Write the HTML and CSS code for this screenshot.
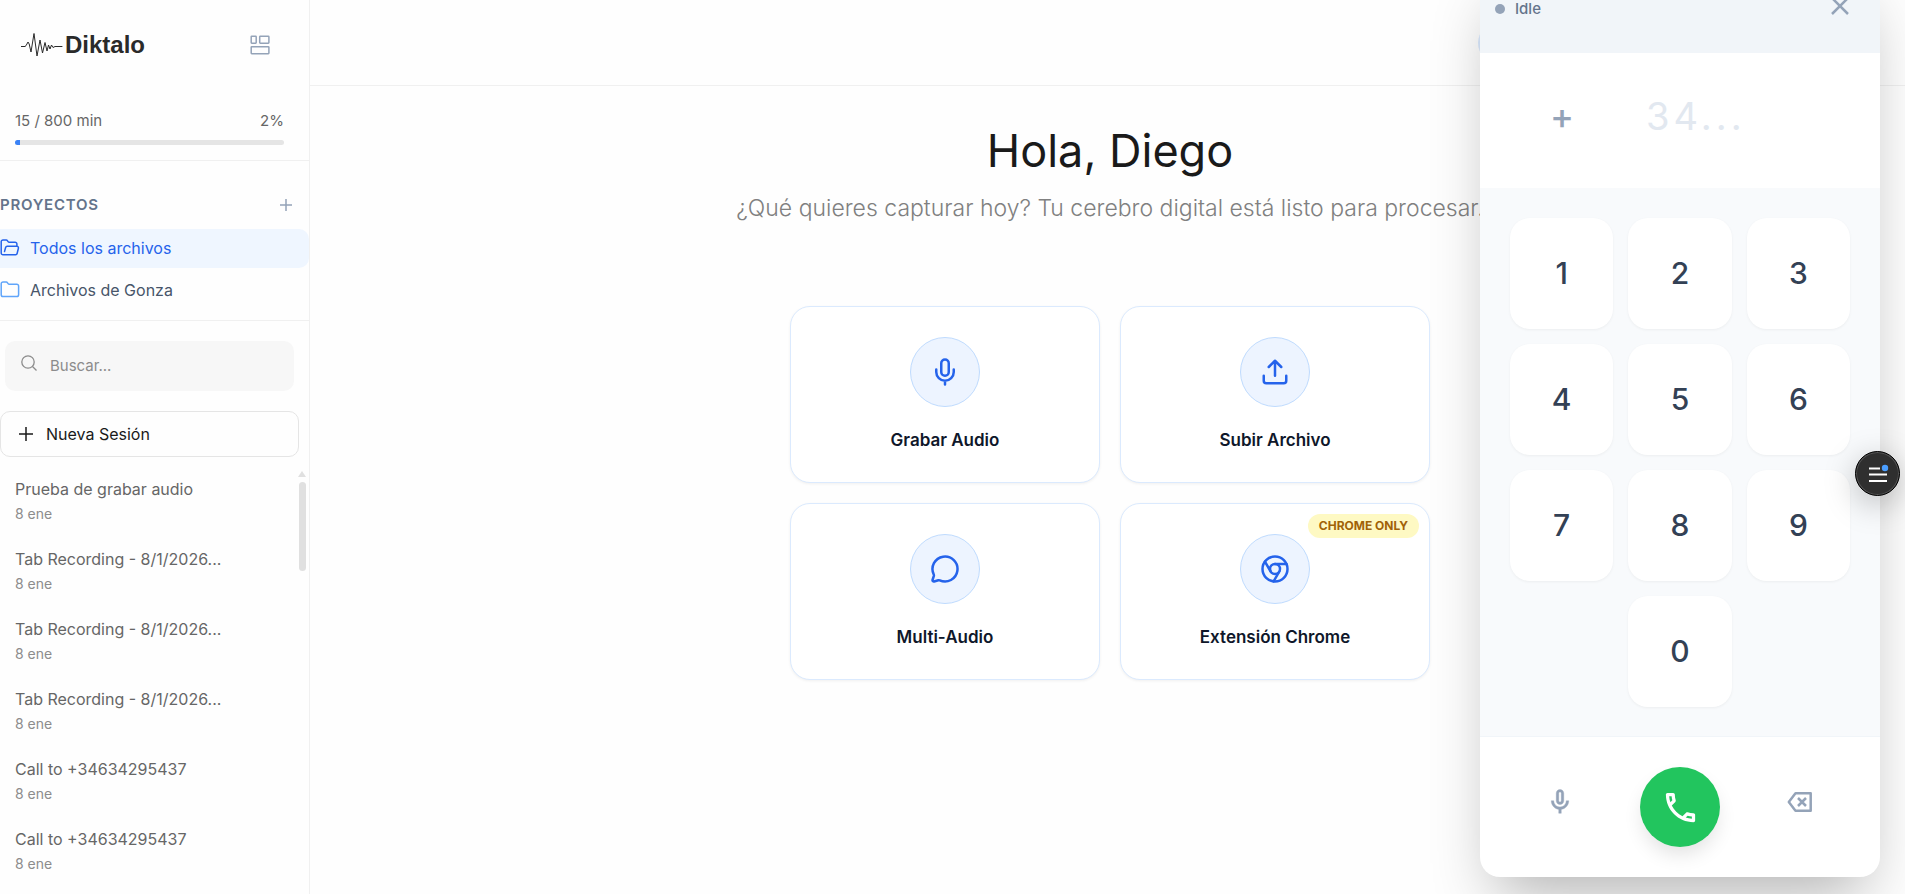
FILE: index.html
```html
<!DOCTYPE html>
<html lang="es">
<head>
<meta charset="utf-8">
<title>Diktalo</title>
<link rel="stylesheet" href="styles.css">
</head>
<body>
<div class="app">
  <aside class="sidebar">
    <div class="brand">
      <a class="logo" href="#">
        <svg class="logo-wave" viewBox="0 0 42 24" width="42" height="24" fill="none" stroke="currentColor" stroke-width="1" stroke-linejoin="round" stroke-linecap="round" aria-hidden="true"><path d="M0 13.500h4l1-.8L7 9l1.200 2L10 19l3-18.500L16 23l3-16 2.500 13L24 9.500l2 8.500 1.500-6 1.500 4 1.500-4 1.500 2.500 2-1h7"/></svg>
        <span class="logo-text">Diktalo</span>
      </a>
      <button class="icon-btn" type="button" aria-label="Vista">
        <svg viewBox="0 0 20 20" width="20" height="20" fill="none" stroke="currentColor" stroke-width="1.500" aria-hidden="true"><rect x="1.200" y="1.200" width="5" height="7" rx=".6"/><rect x="9.700" y="1.200" width="9.200" height="7" rx=".6"/><rect x="1.200" y="11.700" width="17.700" height="7" rx=".6"/></svg>
      </button>
    </div>
    <div class="usage">
      <div class="usage-row"><span>15 / 800 min</span><span>2%</span></div>
      <div class="usage-bar"><div class="usage-fill" style="width:2%"></div></div>
    </div>
    <section class="projects">
      <div class="projects-head">
        <h2>PROYECTOS</h2>
        <button class="icon-btn" type="button" aria-label="Nuevo proyecto">
          <svg viewBox="0 0 14 14" width="14" height="14" fill="none" stroke="currentColor" stroke-width="1.500" aria-hidden="true"><path d="M7 1v12M1 7h12"/></svg>
        </button>
      </div>
      <nav class="project-list">
        <a class="project active" href="#">
          <svg viewBox="0 0 20 18" width="20" height="18" fill="none" stroke="currentColor" stroke-width="1.500" stroke-linejoin="round" stroke-linecap="round" aria-hidden="true"><path d="M4.500 12.500l1.200-4.200a1.500 1.500 0 0 1 1.400-1H17a1.500 1.500 0 0 1 1.400 1.900l-1.300 5.300a1.500 1.500 0 0 1-1.400 1.200H3a1.800 1.800 0 0 1-1.800-1.800V2.800A1.800 1.800 0 0 1 3 1h3.200a1.500 1.500 0 0 1 1.200.7l.7.9a1.500 1.500 0 0 0 1.200.7h5.800a1.800 1.800 0 0 1 1.800 1.800v2"/></svg>
          <span>Todos los archivos</span>
        </a>
        <a class="project" href="#">
          <svg viewBox="0 0 20 18" width="20" height="18" fill="none" stroke="currentColor" stroke-width="1.500" stroke-linejoin="round" aria-hidden="true"><path d="M1.200 2.800A1.800 1.800 0 0 1 3 1h3.200a1.500 1.500 0 0 1 1.200.7l.7.9a1.500 1.500 0 0 0 1.200.7h7.500a1.800 1.800 0 0 1 1.800 1.800v8.600a1.800 1.800 0 0 1-1.800 1.800H3a1.800 1.800 0 0 1-1.800-1.800z"/></svg>
          <span>Archivos de Gonza</span>
        </a>
      </nav>
    </section>
    <label class="search">
      <svg viewBox="0 0 16 16" width="16" height="16" fill="none" stroke="currentColor" stroke-width="1.300" aria-hidden="true"><circle cx="7" cy="7" r="6.200"/><path d="M11.500 11.500l4 4"/></svg>
      <input type="text" placeholder="Buscar..." aria-label="Buscar">
    </label>
    <button class="new-session" type="button">
      <svg viewBox="0 0 14 14" width="14" height="14" fill="none" stroke="currentColor" stroke-width="1.500" aria-hidden="true"><path d="M7 0v14M0 7h14"/></svg>
      <span>Nueva Sesión</span>
    </button>
    <div class="sessions">
      <ul class="session-list">
        <li><a href="#"><span class="title">Prueba de grabar audio</span><span class="date">8 ene</span></a></li>
        <li><a href="#"><span class="title">Tab Recording - 8/1/2026...</span><span class="date">8 ene</span></a></li>
        <li><a href="#"><span class="title">Tab Recording - 8/1/2026...</span><span class="date">8 ene</span></a></li>
        <li><a href="#"><span class="title">Tab Recording - 8/1/2026...</span><span class="date">8 ene</span></a></li>
        <li><a href="#"><span class="title">Call to +34634295437</span><span class="date">8 ene</span></a></li>
        <li><a href="#"><span class="title">Call to +34634295437</span><span class="date">8 ene</span></a></li>
      </ul>
      <div class="scroll-track" aria-hidden="true">
        <svg viewBox="0 0 8 6" width="8" height="6"><path d="M4 0l4 6H0z" fill="#e0e0e0"/></svg>
        <div class="scroll-thumb"></div>
      </div>
    </div>
  </aside>

  <main class="main">
    <header class="topbar"><button class="topbar-pill" type="button" aria-label="Cuenta"></button></header>
    <div class="content">
      <h1>Hola, Diego</h1>
      <p class="lead">¿Qué quieres capturar hoy? Tu cerebro digital está listo para procesar.</p>
      <div class="cards">
        <button class="card" type="button">
          <span class="card-icon"><svg viewBox="0 0 24 24" width="30" height="30" aria-hidden="true"><path d="M12 2a3 3 0 0 0-3 3v7a3 3 0 0 0 6 0V5a3 3 0 0 0-3-3ZM19 10v2a7 7 0 0 1-14 0v-2M12 19v3"/></svg></span>
          <span class="card-label">Grabar Audio</span>
        </button>
        <button class="card" type="button">
          <span class="card-icon"><svg viewBox="0 0 24 24" width="30" height="30" aria-hidden="true"><path d="M21 15v4a2 2 0 0 1-2 2H5a2 2 0 0 1-2-2v-4M17 8l-5-5-5 5M12 3v12"/></svg></span>
          <span class="card-label">Subir Archivo</span>
        </button>
        <button class="card" type="button">
          <span class="card-icon"><svg viewBox="0 0 24 24" width="30" height="30" aria-hidden="true"><path d="M2.992 16.342a2 2 0 0 1 .094 1.167l-1.065 3.290a1 1 0 0 0 1.236 1.168l3.413-.998a2 2 0 0 1 1.099.092 10 10 0 1 0-4.777-4.719"/></svg></span>
          <span class="card-label">Multi-Audio</span>
        </button>
        <button class="card" type="button">
          <span class="badge">CHROME ONLY</span>
          <span class="card-icon"><svg viewBox="0 0 24 24" width="30" height="30" aria-hidden="true"><circle cx="12" cy="12" r="10"/><circle cx="12" cy="12" r="4"/><path d="M21.170 8H12M3.950 6.060L8.540 14M10.880 21.940L15.460 14"/></svg></span>
          <span class="card-label">Extensión Chrome</span>
        </button>
      </div>
    </div>
  </main>
</div>

<section class="dialer" aria-label="Marcador">
  <div class="dialer-head">
    <span class="status">Idle</span>
    <button class="close" type="button" aria-label="Cerrar"><svg viewBox="0 0 18 18" width="18" height="18" fill="none" stroke="currentColor" stroke-width="2.500" aria-hidden="true"><path d="M1 1l16 16M17 1L1 17"/></svg></button>
  </div>
  <div class="display">
    <label class="prefix" for="number">+</label>
    <input id="number" type="tel" placeholder="34...">
  </div>
  <div class="keypad">
    <button type="button">1</button><button type="button">2</button><button type="button">3</button>
    <button type="button">4</button><button type="button">5</button><button type="button">6</button>
    <button type="button">7</button><button type="button">8</button><button type="button">9</button>
    <button class="zero" type="button">0</button>
  </div>
  <div class="actions">
    <button class="action" type="button" aria-label="Silenciar"><svg viewBox="0 0 24 24" width="30" height="30" fill="currentColor" stroke="currentColor" stroke-width=".3" aria-hidden="true"><path d="M12 14c1.660 0 3-1.340 3-3V5c0-1.660-1.340-3-3-3S9 3.340 9 5v6c0 1.660 1.340 3 3 3zm-1-9c0-.55.450-1 1-1s1 .450 1 1v6c0 .550-.450 1-1 1s-1-.450-1-1V5zm6 6c0 2.760-2.240 5-5 5s-5-2.240-5-5H5c0 3.530 2.610 6.430 6 6.920V21h2v-3.080c3.390-.490 6-3.390 6-6.920h-2z"/></svg></button>
    <button class="call" type="button" aria-label="Llamar"><svg viewBox="0 0 24 24" width="39" height="39" fill="currentColor" aria-hidden="true"><path d="M6.540 5c.060.890.210 1.760.450 2.590l-1.200 1.200c-.410-1.200-.670-2.470-.760-3.790h1.510m9.860 12.020c.850.240 1.720.390 2.600.450v1.490c-1.320-.090-2.590-.350-3.800-.750l1.200-1.190M7.500 3H4c-.550 0-1 .450-1 1 0 9.390 7.610 17 17 17 .550 0 1-.450 1-1v-3.490c0-.550-.450-1-1-1-1.240 0-2.450-.200-3.570-.570-.100-.040-.210-.050-.310-.050-.260 0-.510.100-.710.290l-2.200 2.200c-2.830-1.450-5.150-3.760-6.590-6.590l2.200-2.200c.280-.280.360-.670.250-1.020C8.700 6.450 8.500 5.250 8.500 4c0-.550-.450-1-1-1z"/></svg></button>
    <button class="action" type="button" aria-label="Borrar"><svg viewBox="0 0 26 20" width="26" height="20" fill="none" stroke="currentColor" stroke-width="2.500" stroke-linejoin="round" aria-hidden="true"><path d="M8.500 1.300h15.200v17.400H8.500L1.800 10z"/><path d="M11 6l8 8M19 6l-8 8"/></svg></button>
  </div>
</section>

<button class="fab" type="button" aria-label="Menú">
  <svg viewBox="0 0 22 20" width="22" height="20" aria-hidden="true"><path d="M2 4.500h11M2 10.500h18M2 17h18" stroke="#fff" stroke-width="2" fill="none"/><circle cx="18" cy="4" r="3.200" fill="#4a9eff"/></svg>
</button>
</body>
</html>
```

FILE: styles.css
```css
* { box-sizing: border-box; }
html, body { height: 100%; }
body {
  margin: 0;
  overflow: hidden;
  background: #fefefe;
  font-family: Inter, "Liberation Sans", sans-serif;
  font-size: 16px;
  color: #1a1a1a;
}
button, input { font: inherit; color: inherit; border: 0; background: none; padding: 0; margin: 0; }
a { color: inherit; text-decoration: none; }
h1, h2, p, ul { margin: 0; padding: 0; }
ul { list-style: none; }
svg { display: block; flex: none; }

.app { display: flex; height: 100vh; }

/* Sidebar */
.sidebar {
  flex: none;
  width: 310px;
  display: flex;
  flex-direction: column;
  border-right: 1px solid #f0f0f0;
}
.brand {
  display: flex;
  align-items: center;
  justify-content: space-between;
  height: 90px;
  padding: 0 39px 0 21px;
}
.logo { display: flex; align-items: center; gap: 2px; color: #2a2a2a; }
.logo-text { font: bold 24px/28px "Liberation Sans", sans-serif; }
.icon-btn { color: #94a3b8; }

.usage { padding: 21px 25px 15px 15px; border-bottom: 1px solid #f0f0f0; color: #666; }
.usage-row { display: flex; justify-content: space-between; font-size: 15px; line-height: 20px; }
.usage-bar { height: 5px; margin-top: 9px; border-radius: 3px; background: #e5e5e5; overflow: hidden; }
.usage-fill { height: 100%; background: #3b82f6; }

.projects { padding: 33px 0 10px; border-bottom: 1px solid #f0f0f0; }
.projects-head { display: flex; align-items: center; justify-content: space-between; padding-right: 16px; }
.projects-head h2 { font-size: 15px; line-height: 22px; font-weight: 600; letter-spacing: 0.05em; color: #64748b; }
.project-list { display: flex; flex-direction: column; gap: 3px; margin-top: 13px; }
.project {
  display: flex;
  align-items: center;
  gap: 10px;
  height: 39px;
  padding-bottom: 2px;
  border-radius: 0 10px 10px 0;
  color: #475569;
}
.project svg { color: #60a5fa; }
.project.active, .project.active svg { color: #2563eb; }
.project.active { background: #eff6ff; }

.search {
  display: flex;
  align-items: center;
  gap: 13px;
  height: 50px;
  margin: 20px 15px 0 5px;
  padding: 0 16px 2px;
  border-radius: 10px;
  background: #f7f7f7;
  color: #8c8c8c;
}
.search svg { margin-bottom: 5px; }
.search input { flex: 1; min-width: 0; outline: 0; font-size: 15px; }
.search input::placeholder { color: #8c8c8c; opacity: 1; }

.new-session {
  display: flex;
  align-items: center;
  gap: 13px;
  height: 46px;
  margin: 20px 10px 0 0;
  padding: 0 18px;
  border: 1px solid #e5e5e5;
  border-radius: 10px;
}

.sessions { flex: 1; min-height: 0; display: flex; justify-content: space-between; margin-top: 14px; padding-right: 3px; overflow: hidden; }
.session-list a { display: flex; flex-direction: column; gap: 5px; height: 70px; padding: 7px 15px; }
.title { font-size: 16px; line-height: 22px; color: #666; }
.date { font-size: 14px; line-height: 18px; color: #8c8c8c; }
.scroll-track { display: flex; flex-direction: column; align-items: center; gap: 5px; width: 8px; }
.scroll-thumb { width: 7px; height: 89px; border-radius: 4px; background: #e0e0e0; }

/* Main area */
.main { flex: 1; min-width: 0; }
.topbar { display: flex; align-items: center; justify-content: flex-end; height: 86px; padding-right: 30px; border-bottom: 1px solid #f0f0f0; }
.topbar-pill { width: 397px; height: 40px; border-radius: 20px; background: #dbeafe; }
.content { display: flex; flex-direction: column; align-items: center; padding: 36px 0 0 5px; }
.content h1 { font-size: 45px; line-height: 58px; font-weight: 400; }
.lead { margin-top: 12px; font-size: 23px; line-height: 32px; font-weight: 300; color: #808080; }
.cards { display: grid; grid-template-columns: repeat(2, 310px); gap: 20px; margin-top: 82px; }
.card {
  position: relative;
  display: flex;
  flex-direction: column;
  align-items: center;
  gap: 21px;
  padding: 30px 30px 29px;
  border: 1px solid #dbeafe;
  border-radius: 20px;
  background: #fff;
  box-shadow: 0 1px 3px rgba(0, 0, 0, .06);
}
.card-icon {
  display: grid;
  place-items: center;
  width: 70px;
  height: 70px;
  border: 1px solid #bfdbfe;
  border-radius: 50%;
  background: #edf4ff;
  color: #2563eb;
}
.card-icon svg { fill: none; stroke: currentColor; stroke-width: 2; stroke-linecap: round; stroke-linejoin: round; }
.card-label { font-size: 17px; line-height: 25px; font-weight: 600; color: #0f172a; }
.badge {
  position: absolute;
  top: 10px;
  right: 10px;
  padding: 0 11px;
  border-radius: 12px;
  background: #fef9c3;
  color: #a16207;
  font-size: 12px;
  line-height: 24px;
  font-weight: 700;
}

/* Floating dialer */
.dialer {
  position: absolute;
  right: 25px;
  bottom: 17px;
  width: 400px;
  border-radius: 20px;
  background: #fff;
  box-shadow: 0 31px 62px -15px rgba(0, 0, 0, .3);
  overflow: hidden;
}
.dialer-head { display: flex; align-items: center; justify-content: space-between; height: 88px; padding: 0 31px 0 15px; background: #f1f5f9; }
.status { display: flex; align-items: center; gap: 10px; font-size: 15px; line-height: 20px; font-weight: 500; color: #64748b; }
.status::before { content: ""; width: 10px; height: 10px; border-radius: 50%; background: #94a3b8; }
.close { padding-bottom: 6px; color: #94a3b8; }
.display { display: flex; align-items: center; gap: 72px; height: 135px; padding: 0 30px 10px 70px; }
.prefix { font-size: 36px; line-height: 40px; font-weight: 500; color: #94a3b8; }
.display input { flex: 1; min-width: 0; outline: 0; font-size: 38px; line-height: 50px; letter-spacing: 4px; color: #1e293b; }
.display input::placeholder { color: #e2e8f0; opacity: 1; }
.keypad { display: grid; grid-template-columns: repeat(3, 1fr); grid-auto-rows: 111px; gap: 15px; padding: 30px 30px 29px; background: #f8fafc; }
.keypad button {
  padding-bottom: 2px;
  border-radius: 20px;
  background: #fff;
  box-shadow: 0 1px 3px rgba(0, 0, 0, .05);
  font-size: 30px;
  font-weight: 500;
  color: #334155;
}
.keypad .zero { grid-column: 2; }
.actions {
  display: grid;
  grid-template-columns: repeat(3, 1fr);
  place-items: center;
  padding: 30px 20px;
  border-top: 1px solid #f1f5f9;
}
.action { padding-bottom: 10px; color: #94a3b8; }
.call {
  display: grid;
  place-items: center;
  width: 80px;
  height: 80px;
  border-radius: 50%;
  background: #22c55e;
  color: #fff;
  box-shadow: 0 10px 20px -3px rgba(0, 0, 0, .12);
}

.fab {
  position: absolute;
  right: 5px;
  top: 451px;
  display: grid;
  place-items: center;
  width: 45px;
  height: 45px;
  border: 1px solid #000;
  border-radius: 50%;
  background: #2f2f2f;
  box-shadow: inset 0 0 0 1px #555, 0 8px 32px rgba(0, 0, 0, .25);
}
```
